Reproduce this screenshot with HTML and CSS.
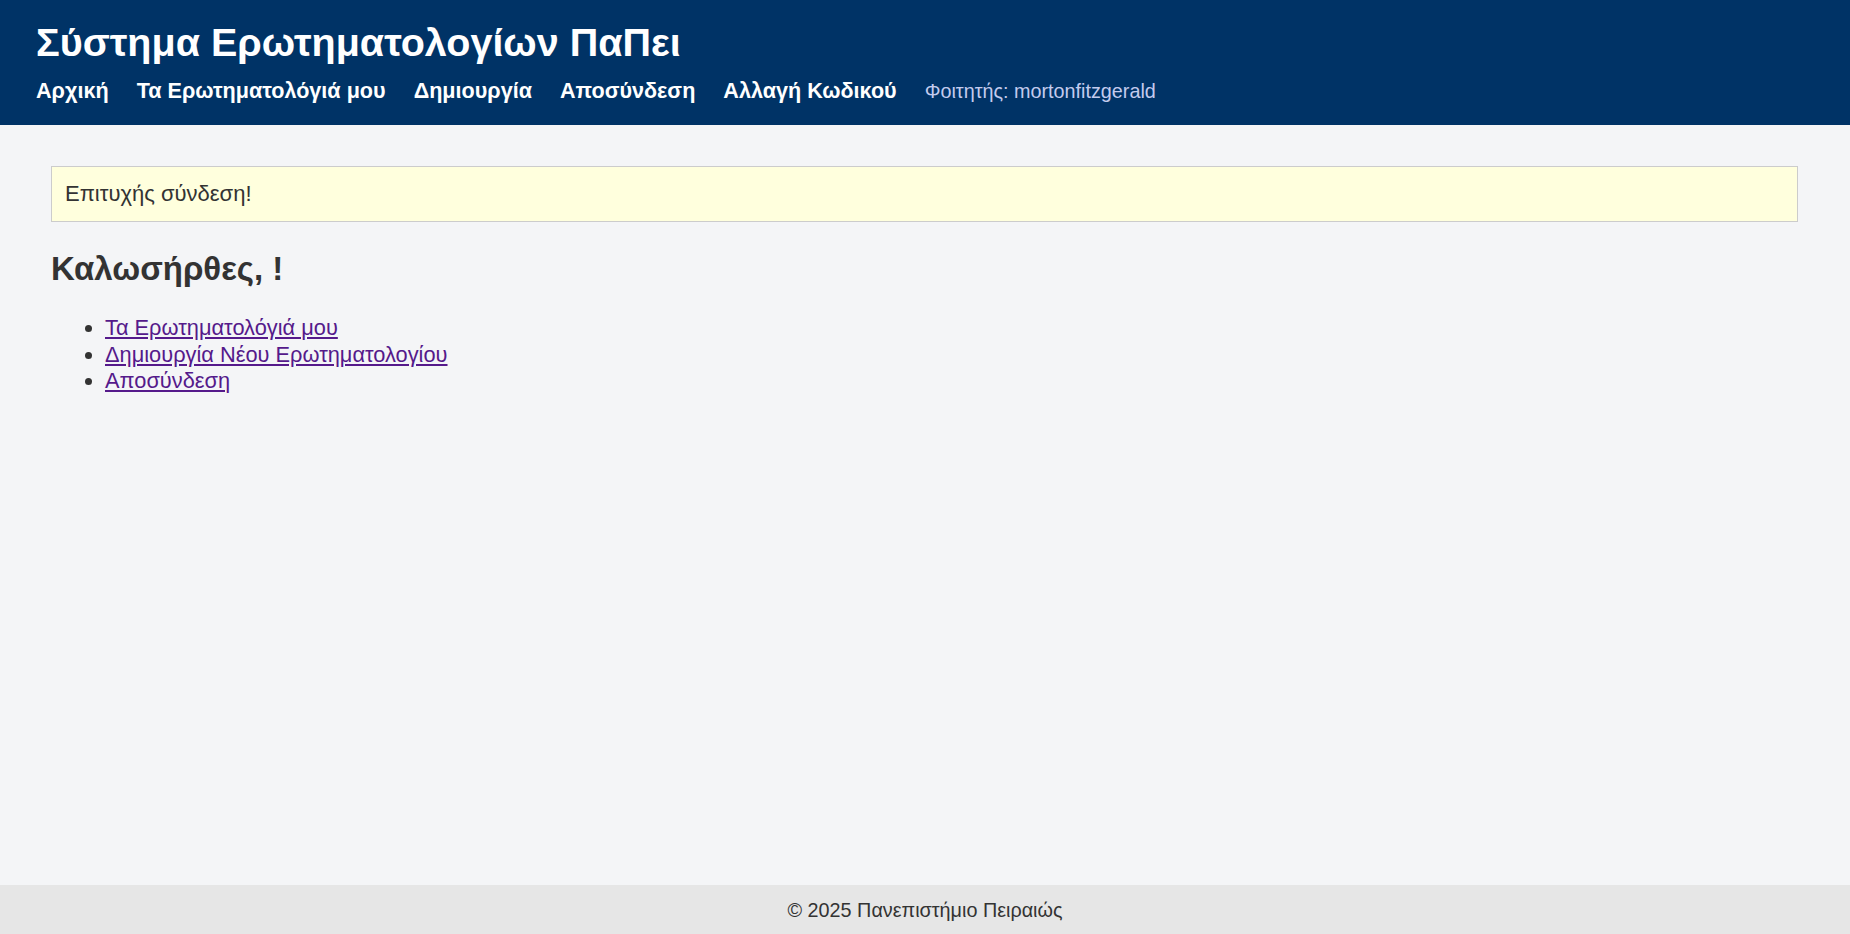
FILE: index.html
```html
<!DOCTYPE html>
<html lang="el">
<head>
<meta charset="utf-8">
<title>Σύστημα Ερωτηματολογίων ΠαΠει</title>
<link rel="stylesheet" href="styles.css">
</head>
<body>
<header class="site-header">
  <h1 class="site-title">Σύστημα Ερωτηματολογίων ΠαΠει</h1>
  <nav class="site-nav">
    <a href="#">Αρχική</a>
    <a href="#">Τα Ερωτηματολόγιά μου</a>
    <a href="#">Δημιουργία</a>
    <a href="#">Αποσύνδεση</a>
    <a href="#">Αλλαγή Κωδικού</a>
    <span class="user">Φοιτητής: mortonfitzgerald</span>
  </nav>
</header>
<main class="content">
  <div class="alert">Επιτυχής σύνδεση!</div>
  <h2 class="welcome">Καλωσήρθες, !</h2>
  <ul class="links">
    <li><a href="#">Τα Ερωτηματολόγιά μου</a></li>
    <li><a href="#">Δημιουργία Νέου Ερωτηματολογίου</a></li>
    <li><a href="#">Αποσύνδεση</a></li>
  </ul>
</main>
<footer class="site-footer">© 2025 Πανεπιστήμιο Πειραιώς</footer>
</body>
</html>
```

FILE: styles.css
```css
html, body {
  margin: 0;
  padding: 0;
}
body {
  font-family: "Liberation Sans", Arial, sans-serif;
  font-size: 22px;
  color: #333;
  background: #f4f5f7;
  min-height: 100vh;
  display: flex;
  flex-direction: column;
}
.site-header {
  background: #003366;
  color: #fff;
  padding: 20px 36px 21px;
}
.site-title {
  margin: 0 0 13px;
  font-size: 39.5px;
  line-height: 45px;
}
.site-nav {
  display: flex;
  align-items: baseline;
  gap: 28px;
  line-height: 26px;
  font-size: 21.6px;
}
.site-nav a {
  color: #fff;
  font-weight: bold;
  text-decoration: none;
}
.site-nav .user {
  color: #c3cbee;
  font-size: 19.8px;
}
.content {
  flex: 1;
  padding: 41px 52px 20px 51px;
}
.alert {
  background: #ffffdd;
  border: 1px solid #ccc;
  padding: 14px 13px;
  line-height: 26px;
}
.welcome {
  font-size: 33px;
  line-height: 38px;
  margin: 28px 0 27px;
}
.links {
  margin: 0;
  padding-left: 54px;
  font-size: 21.8px;
  line-height: 26.5px;
}
.links a {
  color: #551a8b;
}
.site-footer {
  background: #e6e6e6;
  text-align: center;
  font-size: 19.8px;
  line-height: 24px;
  padding: 13px 0 12px;
}
```
